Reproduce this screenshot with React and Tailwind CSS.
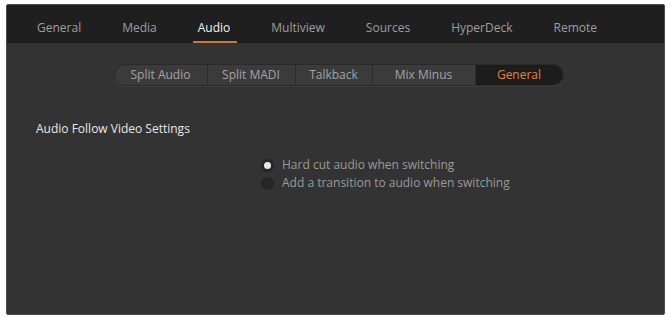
import React, { useState } from 'react';

const tabs = ['General', 'Media', 'Audio', 'Multiview', 'Sources', 'HyperDeck', 'Remote'];
const segments = [
  { name: 'Split Audio', w: 'w-[92px]' },
  { name: 'Split MADI', w: 'w-[88px]' },
  { name: 'Talkback', w: 'w-[77px]' },
  { name: 'Mix Minus', w: 'w-[103px]' },
  { name: 'General', w: 'w-[88px]' },
];

export default function App() {
  const [tab] = useState('Audio');
  const [seg] = useState('General');
  const [mode, setMode] = useState('cut');

  return (
    <div
      className="w-[671px] h-[318px] bg-white pl-[6px] pr-[6px] pt-[4px] pb-[3px]"
      style={{ fontFamily: '"Open Sans", "Liberation Sans", sans-serif' }}
    >
      <div className="h-full flex flex-col bg-[#333333] border border-[#4d4d4d] rounded-[2px] overflow-hidden">
        {/* Top tabs */}
        <div className="h-[38px] shrink-0 bg-[#1f1f1f] flex items-stretch pl-[26px] gap-[33px] text-[12px]">
          {tabs.map((t) => (
            <div
              key={t}
              className={`relative flex items-center px-[4px] pt-[8px] ${
                t === tab ? 'text-[#f2f2f2]' : 'text-[#9e9e9e]'
              }`}
            >
              {t}
              {t === tab && (
                <span className="absolute left-[-1px] right-[-3px] bottom-0 h-[2px] bg-[#c8783a]" />
              )}
            </div>
          ))}
        </div>

        {/* Sub tabs */}
        <div className="flex justify-center pt-[21px] pl-[6px]">
          <div className="flex h-[22px] rounded-full overflow-hidden bg-[#3b3b3b] border border-[#2a2a2a] text-[12px] shadow-[0_1px_0_#3f3f3f]">
            {segments.map((s, i) => (
              <div
                key={s.name}
                className={`${s.w} flex items-center justify-center ${
                  i > 0 ? 'border-l border-[#2c2c2c]' : ''
                } ${
                  s.name === seg
                    ? 'bg-[#1c1c1c] text-[#e0833d]'
                    : 'text-[#a3a3a3]'
                }`}
              >
                {s.name}
              </div>
            ))}
          </div>
        </div>

        {/* Content */}
        <div className="pl-[29px] pt-[34px] text-[12px] text-[#e6e6e6]">
          Audio Follow Video Settings
        </div>

        <div className="pl-[254px] pt-[20px] flex flex-col gap-[4px] text-[12px] text-[#9a9a9a]">
          {[
            { id: 'cut', label: 'Hard cut audio when switching' },
            { id: 'trans', label: 'Add a transition to audio when switching' },
          ].map((o) => (
            <button
              key={o.id}
              onClick={() => setMode(o.id)}
              className="flex items-center gap-[8px] h-[14px] text-left"
            >
              <span className="w-[13px] h-[13px] rounded-full bg-[#262626] flex items-center justify-center">
                {mode === o.id && <span className="w-[7px] h-[7px] rounded-full bg-[#e8e8e8]" />}
              </span>
              {o.label}
            </button>
          ))}
        </div>
      </div>
    </div>
  );
}
